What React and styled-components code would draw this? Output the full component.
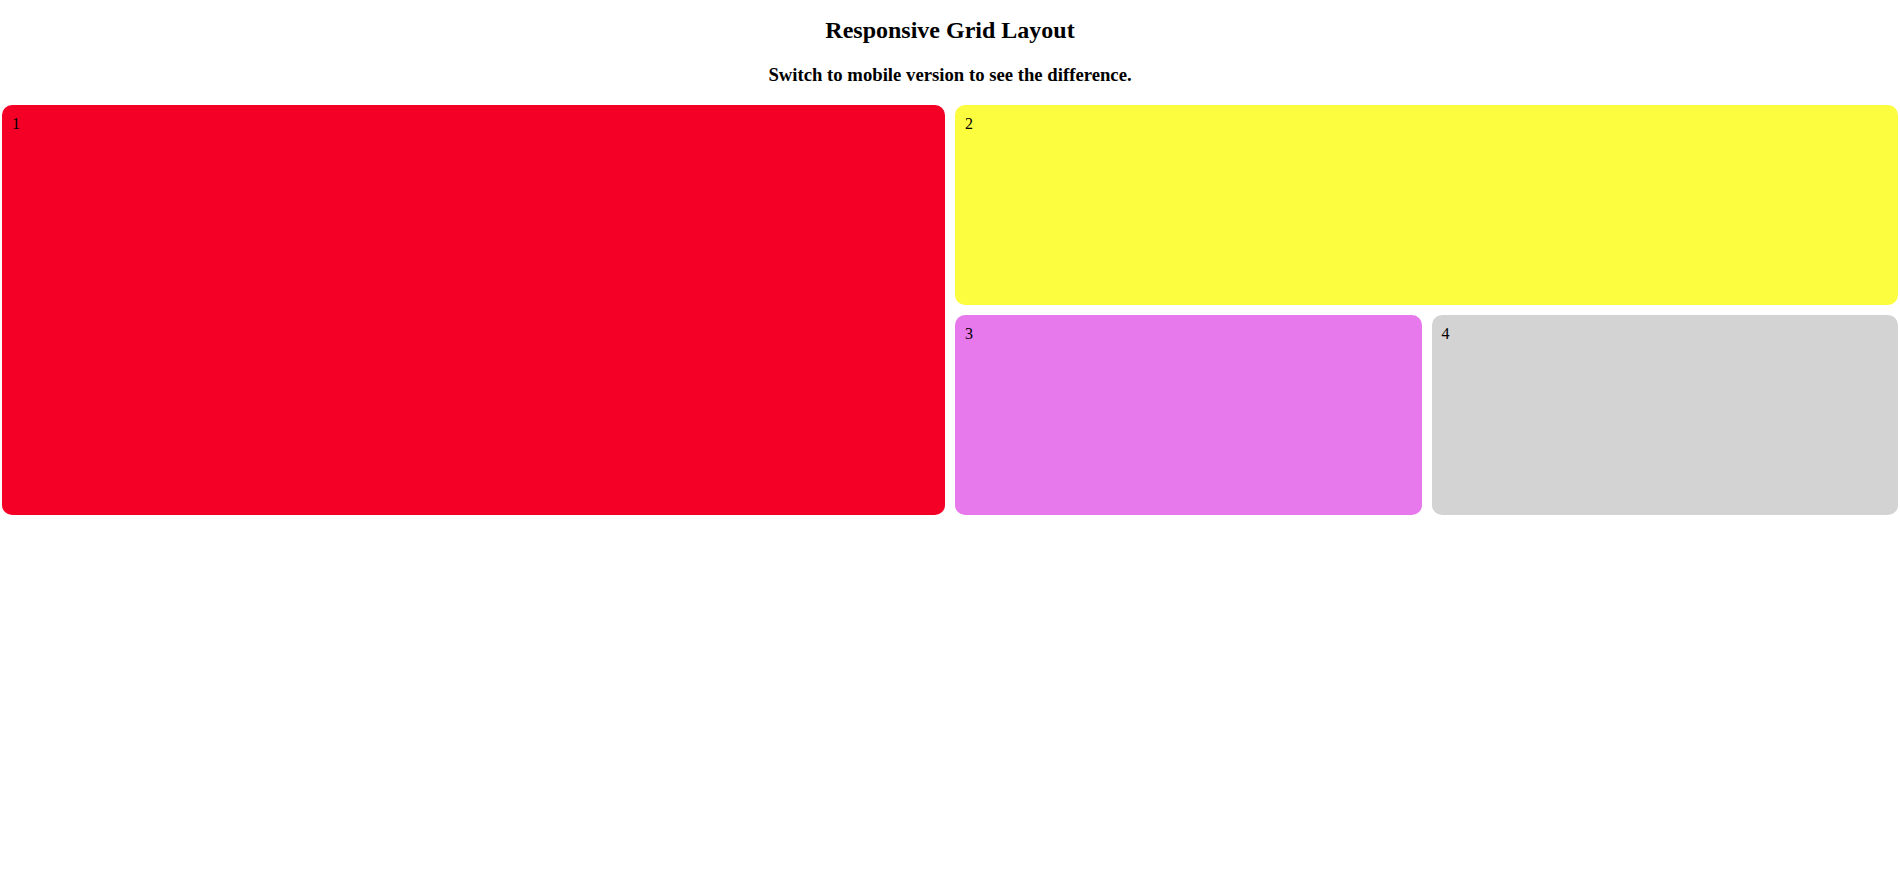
import React from 'react'
import styled, { createGlobalStyle } from 'styled-components'

const GlobalStyle = createGlobalStyle`
  body {
    margin: 0;
    background: #fff;
    font-family: "Liberation Serif", "Times New Roman", serif;
    color: #000;
  }
`

const Page = styled.main`
  padding: 0 2px;
`

const Title = styled.h2`
  font-size: 24px;
  text-align: center;
  margin: 17px 0 0;
`

const Subtitle = styled.h3`
  font-size: 18.72px;
  text-align: center;
  margin: 20px 0 19px;
`

const Grid = styled.section`
  display: grid;
  grid-template-columns: repeat(4, 1fr);
  grid-template-rows: 200px 200px;
  gap: 10px;
`

const Cell = styled.div`
  background-color: ${({ color }) => color};
  border-radius: 10px;
  padding: 10px;
  font-size: 16px;
  grid-column: ${({ span }) => span || 'auto'};
  grid-row: ${({ rows }) => rows || 'auto'};
`

const App = () => (
  <>
    <GlobalStyle />
    <Page>
      <Title>Responsive Grid Layout</Title>
      <Subtitle>Switch to mobile version to see the difference.</Subtitle>
      <Grid>
        <Cell color='#f40027' span='1 / 3' rows='1 / 3'>1</Cell>
        <Cell color='#fdfd40' span='3 / 5'>2</Cell>
        <Cell color='#e879ec'>3</Cell>
        <Cell color='#d3d3d3'>4</Cell>
      </Grid>
    </Page>
  </>
)

export default App
